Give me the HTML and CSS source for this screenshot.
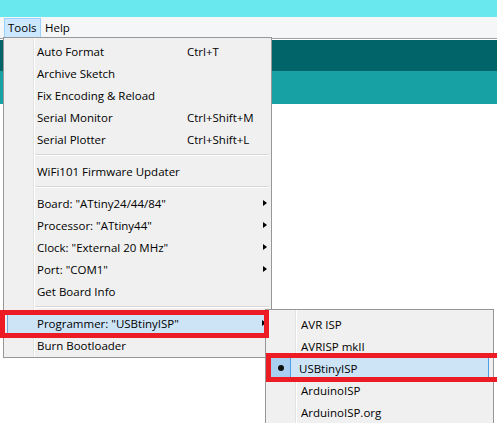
FILE: index.html
```html
<!DOCTYPE html>
<html>
<head>
<meta charset="utf-8">
<link rel="stylesheet" href="styles.css">
</head>
<body>
<div class="app">
  <div class="titlebar"></div>
  <div class="menubar">
    <span class="mb-item active">Tools</span>
    <span class="mb-item">Help</span>
  </div>
  <div class="toolbar"></div>
  <div class="tabbar"></div>
  <div class="editor"></div>

  <div class="menu main">
    <div class="item"><span class="label">Auto Format</span><span class="key">Ctrl+T</span></div>
    <div class="item"><span class="label">Archive Sketch</span></div>
    <div class="item"><span class="label">Fix Encoding &amp; Reload</span></div>
    <div class="item"><span class="label">Serial Monitor</span><span class="key">Ctrl+Shift+M</span></div>
    <div class="item"><span class="label">Serial Plotter</span><span class="key">Ctrl+Shift+L</span></div>
    <div class="sep"></div>
    <div class="item"><span class="label">WiFi101 Firmware Updater</span></div>
    <div class="sep"></div>
    <div class="item sub"><span class="label">Board: "ATtiny24/44/84"</span><span class="arrow"></span></div>
    <div class="item sub"><span class="label">Processor: "ATtiny44"</span><span class="arrow"></span></div>
    <div class="item sub"><span class="label">Clock: "External 20 MHz"</span><span class="arrow"></span></div>
    <div class="item sub"><span class="label">Port: "COM1"</span><span class="arrow"></span></div>
    <div class="item"><span class="label">Get Board Info</span></div>
    <div class="sep"></div>
    <div class="item sub hl"><span class="label">Programmer: "USBtinyISP"</span><span class="arrow"></span></div>
    <div class="item"><span class="label">Burn Bootloader</span></div>
  </div>

  <div class="menu submenu">
    <div class="item"><span class="check"></span><span class="label">AVR ISP</span></div>
    <div class="item"><span class="check"></span><span class="label">AVRISP mkII</span></div>
    <div class="item hl checked"><span class="check"><span class="dot"></span></span><span class="label">USBtinyISP</span></div>
    <div class="item"><span class="check"></span><span class="label">ArduinoISP</span></div>
    <div class="item"><span class="check"></span><span class="label">ArduinoISP.org</span></div>
  </div>

  <div class="mark mark-prog"></div>
  <div class="mark mark-usb"></div>
</div>
</body>
</html>
```

FILE: styles.css
```css
* { box-sizing: border-box; }
html, body { margin: 0; padding: 0; }
body {
  width: 497px;
  height: 423px;
  overflow: hidden;
  background: #ffffff;
  font-family: "Open Sans", "Noto Sans", sans-serif;
  font-size: 11.5px;
  color: #000;
}
.app {
  position: relative;
  width: 497px;
  height: 423px;
  overflow: hidden;
  display: flex;
  flex-direction: column;
}
.titlebar {
  height: 17px;
  background: #69e8ed;
  flex: none;
}
.menubar {
  height: 22px;
  background: #f5f6f7;
  border-bottom: 1px solid #a0a0a0;
  display: flex;
  align-items: stretch;
  padding: 1px 0 0 4px;
  flex: none;
}
.mb-item {
  display: flex;
  align-items: center;
  padding: 0 4px 0 3px;
  border: 1px solid transparent;
  line-height: 1;
}
.mb-item.active {
  background: #cce8ff;
  border-color: #99d1ff;
  width: 37px;
}
.toolbar {
  height: 32px;
  background: #006468;
  border-top: 1px solid #ffffff;
  flex: none;
}
.tabbar {
  height: 33px;
  background: #17a1a5;
  flex: none;
}
.editor {
  flex: 1;
  background: #ffffff;
}

.menu {
  position: absolute;
  background: #f0f0f0;
  border: 1px solid #979797;
  padding: 2px 2px 1px 2px;
}
.menu.main {
  left: 3px;
  top: 37px;
  width: 269px;
  background: linear-gradient(to right, #f0f0f0 0, #f0f0f0 29px, #e2e3e3 29px, #e2e3e3 30px, #ffffff 30px, #ffffff 31px, #f0f0f0 31px);
}
.menu .item {
  position: relative;
  height: 22px;
  display: flex;
  align-items: center;
  padding-left: 31px;
  white-space: nowrap;
}
.menu .item .key {
  position: absolute;
  left: 181px;
}
.menu .item .arrow {
  position: absolute;
  left: 257px;
  top: 8px;
  width: 0;
  height: 0;
  border-top: 3.5px solid transparent;
  border-bottom: 3.5px solid transparent;
  border-left: 4px solid #000;
}
.menu .sep {
  height: 10px;
  margin-left: 29px;
  padding-top: 4px;
}
.menu .sep::before {
  content: "";
  display: block;
  height: 1px;
  background: #d7d7d7;
  border-bottom: 1px solid #ffffff;
  box-sizing: content-box;
}
.menu.main .item.hl {
  background: #cde4f7;
  border-left: 1px solid #6fa8dc;
  margin-left: 1px;
  padding-left: 29px;
}
.menu.main .item.hl .arrow {
  left: 254px;
}

.submenu {
  left: 265px;
  top: 309px;
  width: 229px;
  height: 130px;
  padding-top: 3px;
  background: linear-gradient(to right, #f0f0f0 0, #f0f0f0 29px, #e2e3e3 29px, #e2e3e3 30px, #ffffff 30px, #ffffff 31px, #f0f0f0 31px);
}
.submenu .item {
  padding-left: 0;
}
.submenu .item .check {
  width: 31px;
  height: 100%;
  flex: none;
  display: flex;
  align-items: center;
  justify-content: center;
}
.submenu .item .label {
  padding-left: 2px;
}
.submenu .item.hl {
  background: #cde4f7;
  margin-left: 3px;
  margin-right: 2px;
  border-right: 1px solid #4a9ee8;
}
.submenu .item.hl .check {
  width: 20px;
  background: #a8cfef;
  border-right: 1px solid #4a9ee8;
  margin-right: 8px;
}
.submenu .item.hl .label {
  padding-left: 0;
}
.dot {
  width: 6px;
  height: 6px;
  border-radius: 50%;
  background: #111;
}

.mark {
  position: absolute;
  border: 5px solid #ed1c24;
}
.mark-prog {
  left: 0;
  top: 310px;
  width: 269px;
  height: 28px;
}
.mark-usb {
  left: 266px;
  top: 353px;
  width: 240px;
  height: 29px;
}
```
